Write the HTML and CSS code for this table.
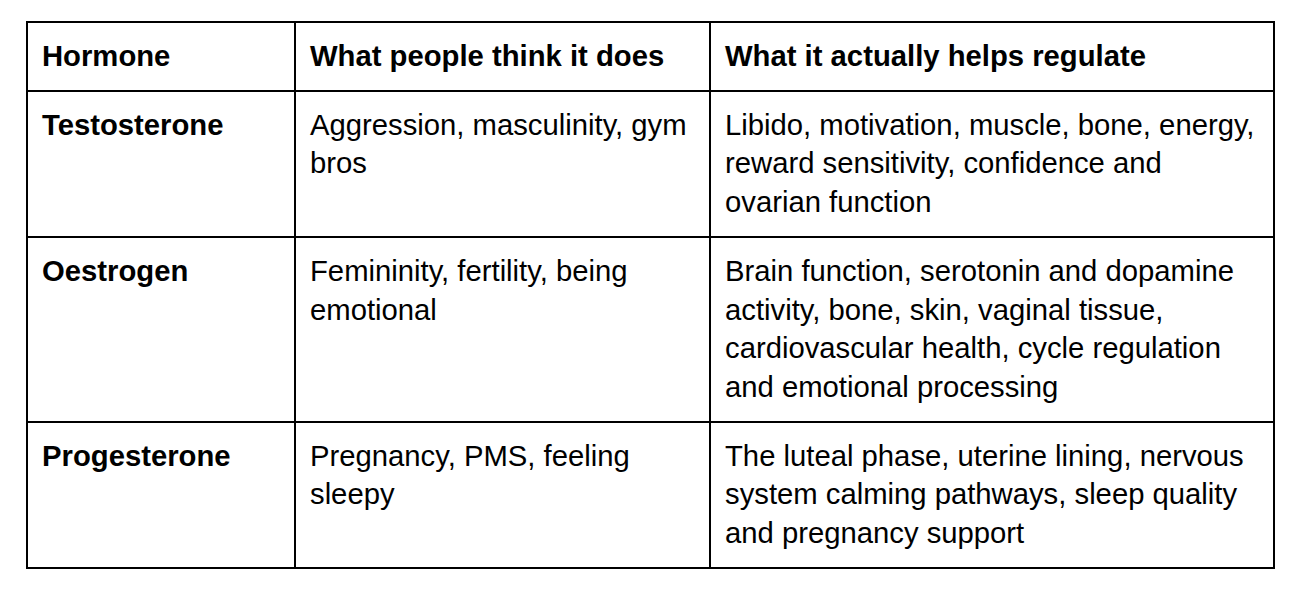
FILE: index.html
```html
<!DOCTYPE html>
<html lang="en">
<head>
<meta charset="utf-8">
<title>Hormones</title>
<link rel="stylesheet" href="styles.css">
</head>
<body>
<div class="table">
  <div class="cell head">Hormone</div>
  <div class="cell head">What people think it does</div>
  <div class="cell head">What it actually helps regulate</div>

  <div class="cell name">Testosterone</div>
  <div class="cell">Aggression, masculinity, gym bros</div>
  <div class="cell">Libido, motivation, muscle, bone, energy, reward sensitivity, confidence and ovarian function</div>

  <div class="cell name">Oestrogen</div>
  <div class="cell">Femininity, fertility, being emotional</div>
  <div class="cell">Brain function, serotonin and dopamine activity, bone, skin, vaginal tissue, cardiovascular health, cycle regulation and emotional processing</div>

  <div class="cell name">Progesterone</div>
  <div class="cell">Pregnancy, PMS, feeling sleepy</div>
  <div class="cell">The luteal phase, uterine lining, nervous system calming pathways, sleep quality and pregnancy support</div>
</div>
</body>
</html>
```
FILE: styles.css
```css
html, body {
  margin: 0;
  padding: 0;
  background: #ffffff;
}

body {
  padding: 21px 0 0 26px;
  font-family: "Liberation Sans", Arial, sans-serif;
  font-size: 29.25px;
  line-height: 38.7px;
  color: #000000;
}

.table {
  display: grid;
  grid-template-columns: 268px 415px 564px;
  width: 1249px;
  box-sizing: border-box;
  border-top: 2px solid #000;
  border-left: 2px solid #000;
}

.cell {
  box-sizing: border-box;
  border-right: 2px solid #000;
  border-bottom: 2px solid #000;
  padding: 14px 15px 14px 14px;
}

.head,
.name {
  font-weight: bold;
}
```
